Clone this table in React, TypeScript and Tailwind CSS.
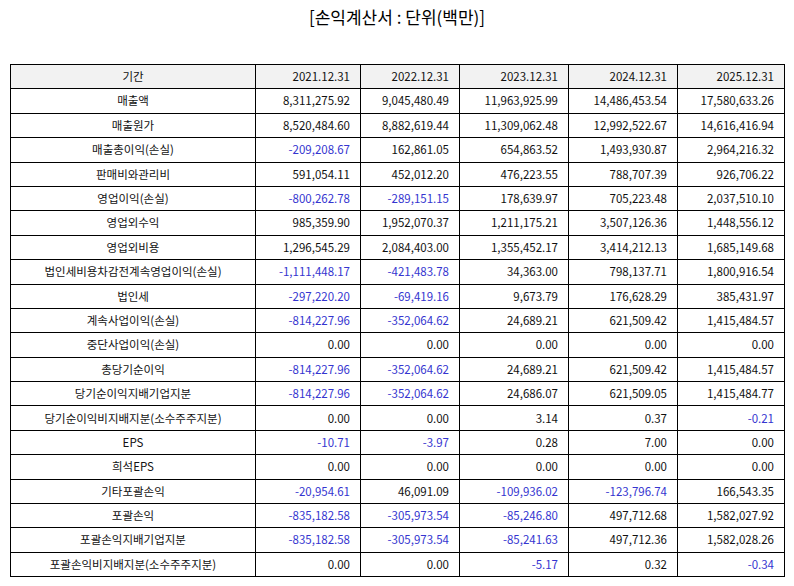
const years = ["2021.12.31", "2022.12.31", "2023.12.31", "2024.12.31", "2025.12.31"];

const ROWS: [string, string[]][] = [
  ["매출액", ["8,311,275.92", "9,045,480.49", "11,963,925.99", "14,486,453.54", "17,580,633.26"]],
  ["매출원가", ["8,520,484.60", "8,882,619.44", "11,309,062.48", "12,992,522.67", "14,616,416.94"]],
  ["매출총이익(손실)", ["-209,208.67", "162,861.05", "654,863.52", "1,493,930.87", "2,964,216.32"]],
  ["판매비와관리비", ["591,054.11", "452,012.20", "476,223.55", "788,707.39", "926,706.22"]],
  ["영업이익(손실)", ["-800,262.78", "-289,151.15", "178,639.97", "705,223.48", "2,037,510.10"]],
  ["영업외수익", ["985,359.90", "1,952,070.37", "1,211,175.21", "3,507,126.36", "1,448,556.12"]],
  ["영업외비용", ["1,296,545.29", "2,084,403.00", "1,355,452.17", "3,414,212.13", "1,685,149.68"]],
  ["법인세비용차감전계속영업이익(손실)", ["-1,111,448.17", "-421,483.78", "34,363.00", "798,137.71", "1,800,916.54"]],
  ["법인세", ["-297,220.20", "-69,419.16", "9,673.79", "176,628.29", "385,431.97"]],
  ["계속사업이익(손실)", ["-814,227.96", "-352,064.62", "24,689.21", "621,509.42", "1,415,484.57"]],
  ["중단사업이익(손실)", ["0.00", "0.00", "0.00", "0.00", "0.00"]],
  ["총당기순이익", ["-814,227.96", "-352,064.62", "24,689.21", "621,509.42", "1,415,484.57"]],
  ["당기순이익지배기업지분", ["-814,227.96", "-352,064.62", "24,686.07", "621,509.05", "1,415,484.77"]],
  ["당기순이익비지배지분(소수주주지분)", ["0.00", "0.00", "3.14", "0.37", "-0.21"]],
  ["EPS", ["-10.71", "-3.97", "0.28", "7.00", "0.00"]],
  ["희석EPS", ["0.00", "0.00", "0.00", "0.00", "0.00"]],
  ["기타포괄손익", ["-20,954.61", "46,091.09", "-109,936.02", "-123,796.74", "166,543.35"]],
  ["포괄손익", ["-835,182.58", "-305,973.54", "-85,246.80", "497,712.68", "1,582,027.92"]],
  ["포괄손익지배기업지분", ["-835,182.58", "-305,973.54", "-85,241.63", "497,712.36", "1,582,028.26"]],
  ["포괄손익비지배지분(소수주주지분)", ["0.00", "0.00", "-5.17", "0.32", "-0.34"]],
];

const colWidths = ["w-[245px]", "w-[105px]", "w-[99px]", "w-[109px]", "w-[109px]", "w-[107px]"];

export default function App() {
  return (
    <div
      className="w-[794px] h-[586px] bg-white text-[#111] overflow-hidden"
      style={{ fontFamily: '"Noto Sans CJK KR", "Noto Sans", sans-serif' }}
    >
      <h1 className="pt-[5px] h-[64px] text-center text-[17px] leading-[24px] text-black">
        [손익계산서 : 단위(백만)]
      </h1>
      <table className="ml-[10px] w-[774px] table-fixed border-collapse border-[1.5px] border-black text-[11.5px]">
        <colgroup>
          {colWidths.map((w, i) => (
            <col key={i} className={w} />
          ))}
        </colgroup>
        <thead>
          <tr className="h-[24.4px] bg-[#f2f2f2]">
            <th className="border-[1.5px] border-black font-normal text-center">기간</th>
            {years.map((y) => (
              <th key={y} className="border-[1.5px] border-black font-normal text-right pr-[10px]">
                {y}
              </th>
            ))}
          </tr>
        </thead>
        <tbody>
          {ROWS.map(([label, vals]) => (
            <tr key={label} className="h-[24.4px]">
              <td className="border-[1.5px] border-black text-center whitespace-nowrap">{label}</td>
              {vals.map((v, i) => (
                <td
                  key={i}
                  className={
                    "border-[1.5px] border-black text-right pr-[10px] whitespace-nowrap " +
                    (v.startsWith("-") ? "text-[#3535d0]" : "")
                  }
                >
                  {v}
                </td>
              ))}
            </tr>
          ))}
        </tbody>
      </table>
    </div>
  );
}
